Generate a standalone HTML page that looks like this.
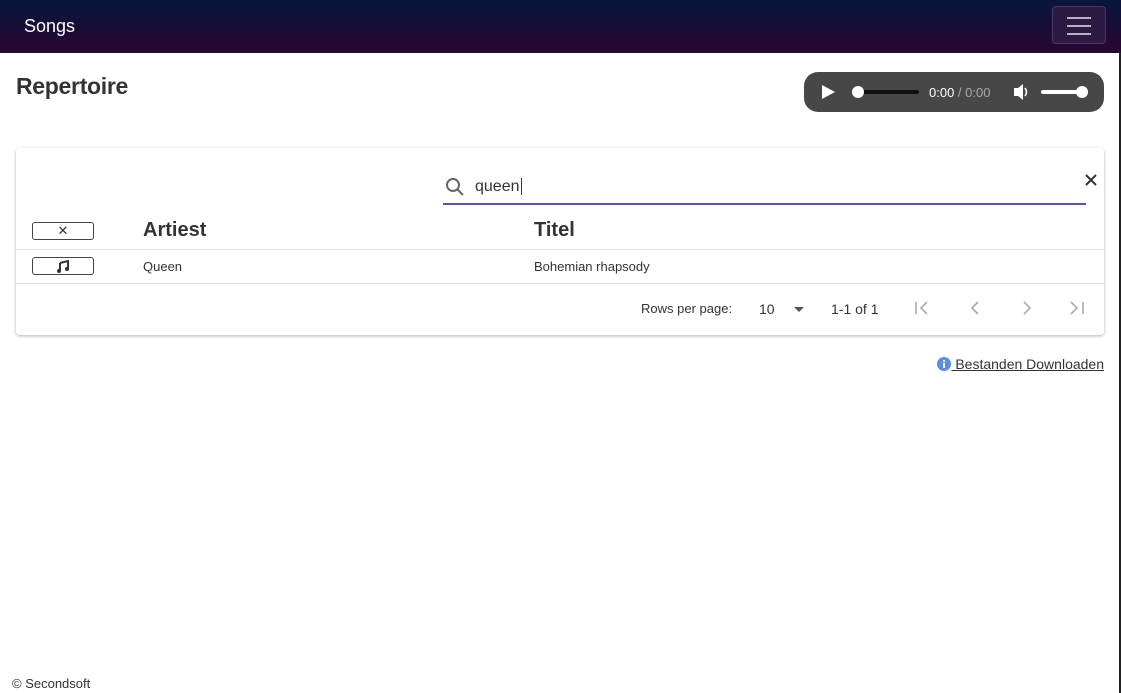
<!DOCTYPE html>
<html><head><style>
body{margin:0;width:1121px;height:693px;position:relative;overflow:hidden;font-family:"Liberation Sans",sans-serif;background:#fff;color:#333}
.nav{position:absolute;left:0;top:0;width:1121px;height:53px;background:linear-gradient(#07173d,#2a0630);}
.nav .t{position:absolute;left:24px;top:16px;color:#fff;font-size:18px}
.burger{position:absolute;left:1052px;top:6px;width:54px;height:38px;border:1px solid #4a3a5e;border-radius:4px;background:#2d1a42;box-sizing:border-box}
.burger i{position:absolute;left:14px;width:24px;height:2px;background:#b9b0c4}
.edge{position:absolute;left:1119px;top:53px;width:2px;height:640px;background:#222}
h1{position:absolute;left:16px;top:73px;margin:0;font-size:23px;font-weight:bold;color:#333;letter-spacing:-0.3px}
.audio{position:absolute;left:804px;top:72px;width:300px;height:40px;border-radius:14px;background:#474747}
.card{position:absolute;left:16px;top:148px;width:1088px;height:187px;border-radius:4px;box-shadow:0 1px 3px rgba(0,0,0,.3);background:#fff}
.search{position:absolute;left:427px;top:24px;width:643px;height:31px;border-bottom:2px solid #5b4bdc}
.btn{position:absolute;left:16px;width:62px;height:18px;border:1px solid #444;border-radius:3px;box-sizing:border-box;text-align:center;font-size:13px;line-height:16px}
.hd{position:absolute;font-size:20px;font-weight:bold;color:#333}
.line{position:absolute;left:0;width:1088px;height:1px;background:#e0e0e0}
.cell{position:absolute;font-size:13px;color:#333}
.pg{position:absolute;top:153px;font-size:14px;color:#333}
.link{position:absolute;right:17px;top:356px;font-size:14px;color:#333;text-decoration:underline}
.foot{position:absolute;left:12px;top:676px;font-size:13px;color:#333}
</style></head><body>
<div class="nav"><div class="t">Songs</div><div class="burger"><i style="top:10px"></i><i style="top:18px"></i><i style="top:26px"></i></div></div>
<div class="edge"></div>
<h1>Repertoire</h1>
<div class="audio">
<svg width="300" height="40" style="position:absolute;left:0;top:0">
<path d="M18 13 L31 20 L18 27Z" fill="#fff"/>
<rect x="54" y="18" width="61" height="4" rx="2" fill="#111"/>
<circle cx="54" cy="20" r="6" fill="#fff"/>
<text x="125" y="25" font-family="Liberation Sans" font-size="13" fill="#fff">0:00 <tspan fill="#aaa">/ 0:00</tspan></text>
<path d="M210 16h4l5-4v16l-5-4h-4z" fill="#fff"/>
<path d="M221 16 q3 4 0 8" stroke="#fff" stroke-width="1.6" fill="none"/>
<rect x="237" y="18" width="42" height="4" rx="2" fill="#fff"/>
<circle cx="278" cy="20" r="6" fill="#fff"/>
</svg></div>
<div class="card">
<div class="search">
<svg width="22" height="22" style="position:absolute;left:2px;top:5px"><circle cx="8" cy="8" r="6" stroke="#666" stroke-width="2" fill="none"/><path d="M12.5 12.5 L18 18" stroke="#666" stroke-width="2"/></svg>
<span style="position:absolute;left:32px;top:6px;font-size:16px;color:#333">queen<span style="border-left:1px solid #333;margin-left:1px"></span></span>
</div>
<svg width="14" height="14" style="position:absolute;left:1068px;top:25px"><path d="M2 2L12 12M12 2L2 12" stroke="#333" stroke-width="2"/></svg>
<div class="btn" style="top:74px">✕</div>
<div class="hd" style="left:127px;top:71px">Artiest</div>
<div class="hd" style="left:518px;top:71px">Titel</div>
<div class="line" style="top:101px"></div>
<div class="btn" style="top:109px"><svg width="14" height="13" style="margin-top:2px"><path d="M4 3 L12 1 V9 M4 3 V11" stroke="#333" stroke-width="2" fill="none"/><circle cx="3" cy="11" r="2" fill="#333"/><circle cx="11" cy="9" r="2" fill="#333"/></svg></div>
<div class="cell" style="left:127px;top:111px">Queen</div>
<div class="cell" style="left:518px;top:111px">Bohemian rhapsody</div>
<div class="line" style="top:135px"></div>
<div class="pg" style="left:625px;font-size:13px">Rows per page:</div>
<div class="pg" style="left:743px">10</div>
<svg width="12" height="8" style="position:absolute;left:777px;top:158px"><path d="M1 1h10L6 6z" fill="#555"/></svg>
<div class="pg" style="left:815px">1-1 of 1</div>
<svg width="180" height="20" style="position:absolute;left:895px;top:150px"><g stroke="#aaa" stroke-width="1.6" fill="none"><path d="M5 4v12M16 4l-6 6 6 6"/><path d="M67 4l-6 6 6 6"/><path d="M113 4l6 6-6 6"/><path d="M160 4l6 6-6 6M172 4v12"/></g></svg>
</div>
<div class="link"><svg width="14" height="14" style="vertical-align:-2px"><circle cx="7" cy="7" r="7" fill="#5a8ee0"/><rect x="6" y="6" width="2" height="5" fill="#fff"/><circle cx="7" cy="4" r="1.1" fill="#fff"/></svg> Bestanden Downloaden</div>
<div class="foot">© Secondsoft</div>
</body></html>
